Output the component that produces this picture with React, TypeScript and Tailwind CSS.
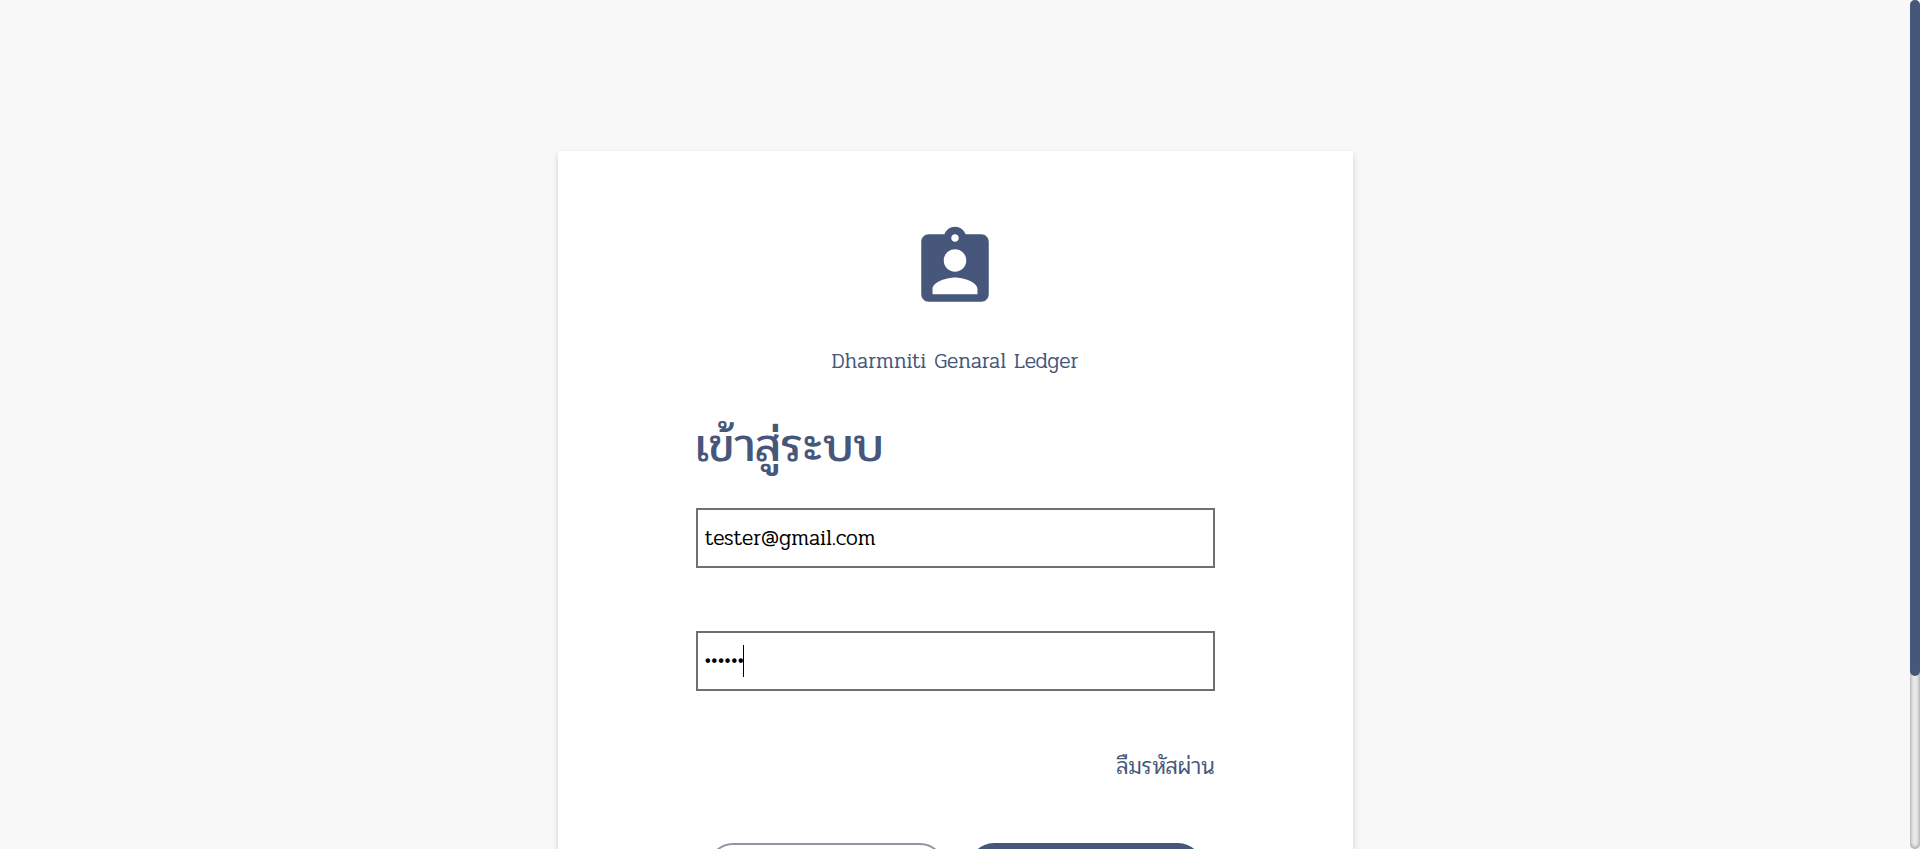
import React, { useState } from "react";
import { MdAssignmentInd } from "react-icons/md";

const field =
  "block h-[60px] w-full border-2 border-[#707070] bg-white px-[7px] text-[21px] font-light text-black outline-none";

export default function App() {
  const [email, setEmail] = useState("tester@gmail.com");
  const [password, setPassword] = useState("123456");

  return (
    <div className="flex h-screen overflow-hidden bg-[#f8f8f8] font-['Pridi','Maitree','Bitter','DejaVu_Serif','Noto_Serif_Thai',serif] text-[#46577b]">
      <main className="flex min-w-0 flex-1 items-start justify-center overflow-y-auto pt-[151px] [scrollbar-width:none]">
        <form
          className="flex w-[795px] max-w-full shrink-0 flex-col bg-white px-[138px] pt-[72px] pb-20 shadow-[0_3px_6px_rgba(0,0,0,0.16)]"
          onSubmit={(e) => e.preventDefault()}
        >
          <MdAssignmentInd className="size-[90px] self-center" aria-hidden="true" />
          <p className="mt-8 text-center text-[21px] leading-[32px] font-light">Dharmniti Genaral Ledger</p>
          <h1 className="mt-[35px] text-[48px] leading-[68px] font-normal">เข้าสู่ระบบ</h1>
          <input
            type="email"
            aria-label="อีเมล"
            className={`${field} mt-7`}
            value={email}
            onChange={(e) => setEmail(e.target.value)}
          />
          <div className="relative mt-[63px]">
            <input
              type="password"
              aria-label="รหัสผ่าน"
              className={field}
              value={password}
              onChange={(e) => setPassword(e.target.value)}
            />
            <span className="absolute top-[14px] left-[47px] h-8 w-px bg-black" aria-hidden="true" />
          </div>
          <a href="#forgot" className="mt-[60px] self-end text-[23px] leading-[32px] font-light">
            ลืมรหัสผ่าน
          </a>
          <div className="mt-[60px] flex justify-center gap-6 px-3">
            <button type="button" className="h-[60px] flex-1 rounded-[25px] border-2 border-[#8e94a6] bg-white">
              ลงทะเบียน
            </button>
            <button type="submit" className="h-[60px] flex-1 rounded-[25px] bg-[#46577b] text-white">
              เข้าสู่ระบบ
            </button>
          </div>
        </form>
      </main>
      <div className="h-full w-[10px] rounded-[10px] bg-[#eeeeee] shadow-[inset_0_0_5px_#808080]" aria-hidden="true">
        <div className="h-[79.6%] rounded-[10px] bg-[#46577b]" />
      </div>
    </div>
  );
}
